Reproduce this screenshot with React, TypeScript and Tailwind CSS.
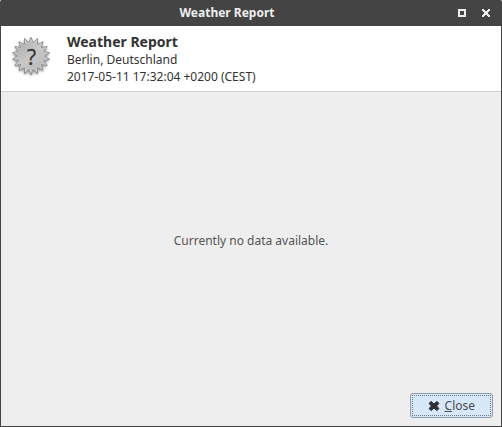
const SPIKES = 18;

function starPoints(cx: number, cy: number, outer: number, inner: number) {
  const pts: string[] = [];
  for (let i = 0; i < SPIKES * 2; i++) {
    const r = i % 2 === 0 ? outer : inner;
    const a = (Math.PI * i) / SPIKES - Math.PI / 2;
    pts.push(`${(cx + r * Math.cos(a)).toFixed(2)},${(cy + r * Math.sin(a)).toFixed(2)}`);
  }
  return pts.join(" ");
}

function UnknownWeatherIcon() {
  return (
    <svg width="48" height="48" viewBox="0 0 48 48" className="shrink-0" aria-hidden="true">
      <defs>
        <linearGradient id="burst" x1="0" y1="0" x2="1" y2="1">
          <stop offset="0" stopColor="#a8a8a8" />
          <stop offset="0.5" stopColor="#c8c8c8" />
          <stop offset="1" stopColor="#b4b4b4" />
        </linearGradient>
        <filter id="soft" x="-20%" y="-20%" width="140%" height="140%">
          <feGaussianBlur stdDeviation="1.2" />
        </filter>
      </defs>
      <polygon points={starPoints(24, 25.5, 19, 15)} fill="#000" opacity="0.35" filter="url(#soft)" />
      <polygon
        points={starPoints(24, 24, 18.8, 13.3)}
        fill="#d6d6d6"
        stroke="#8a8a8a"
        strokeWidth="0.9"
        strokeLinejoin="round"
      />
      <polygon points={starPoints(24, 24, 15.8, 12)} fill="url(#burst)" />
      <text x="24.5" y="33" textAnchor="middle" fill="#3a3a3a" stroke="#3a3a3a" strokeWidth="0.3" fontSize="21" fontFamily="'Noto Sans', sans-serif">
        ?
      </text>
    </svg>
  );
}

function TitleBar({ title }: { title: string }) {
  return (
    <header className="relative flex h-[26px] items-center justify-end bg-[#444444] pr-[3px]">
      <h1 className="absolute inset-x-0 pr-12 text-center text-xs leading-4 font-bold text-[#eeeeee]">{title}</h1>
      <div className="relative flex">
        <button type="button" aria-label="Maximize" className="flex h-6 w-6 items-center justify-center">
          <svg width="8" height="8" viewBox="0 0 8 8" shapeRendering="crispEdges">
            <rect x="1" y="1" width="6" height="6" fill="none" stroke="#eeeeee" strokeWidth="2" />
          </svg>
        </button>
        <button type="button" aria-label="Close window" className="flex h-6 w-6 items-center justify-center">
          <svg width="8" height="8" viewBox="0 0 8 8" shapeRendering="crispEdges" fill="#eeeeee">
            <path d="M0 0h2v1h1v1h2v-1h1v-1h2v2h-1v1h-1v2h1v1h1v2h-2v-1h-1v-1h-2v1h-1v1h-2v-2h1v-1h1v-2h-1v-1h-1z" />
          </svg>
        </button>
      </div>
    </header>
  );
}

export default function App() {
  return (
    <div className="flex h-screen flex-col rounded-t-[2px] border border-t-0 border-[#444444] bg-[#eeeeee] font-['Noto_Sans',sans-serif] text-xs text-[#333333]">
      <TitleBar title="Weather Report" />
      <section className="flex gap-3 border-b border-[#cfcfcf] bg-white p-1.5">
        <UnknownWeatherIcon />
        <div>
          <h2 className="text-sm leading-[19px] font-bold">Weather Report</h2>
          <p className="leading-[17px]">Berlin, Deutschland</p>
          <p className="leading-[17px]">2017-05-11 17:32:04 +0200 (CEST)</p>
        </div>
      </section>
      <main className="flex flex-1 items-center justify-center text-[#555555]">
        <p>Currently no data available.</p>
      </main>
      <footer className="flex justify-end px-2 pt-1 pb-2">
        <button
          type="button"
          className="rounded-[3px] border border-[#8f9cab] bg-[#d8e8fb] p-px text-[#4c4c4c]"
        >
          <span className="flex h-[21px] items-center gap-[5px] border border-dotted border-[#6b7885] px-[15px]">
            <svg width="12" height="12" viewBox="0 0 12 12" aria-hidden="true">
              <path
                d="M3.2 1.4 6 4 8.8 1.4 11 3.4 8.6 6 11 8.6 8.8 10.6 6 8 3.2 10.6 1 8.6 3.4 6 1 3.4z"
                fill="#2e3236"
                stroke="#2e3236"
                strokeLinejoin="round"
              />
            </svg>
            <span>
              <u>C</u>lose
            </span>
          </span>
        </button>
      </footer>
    </div>
  );
}
